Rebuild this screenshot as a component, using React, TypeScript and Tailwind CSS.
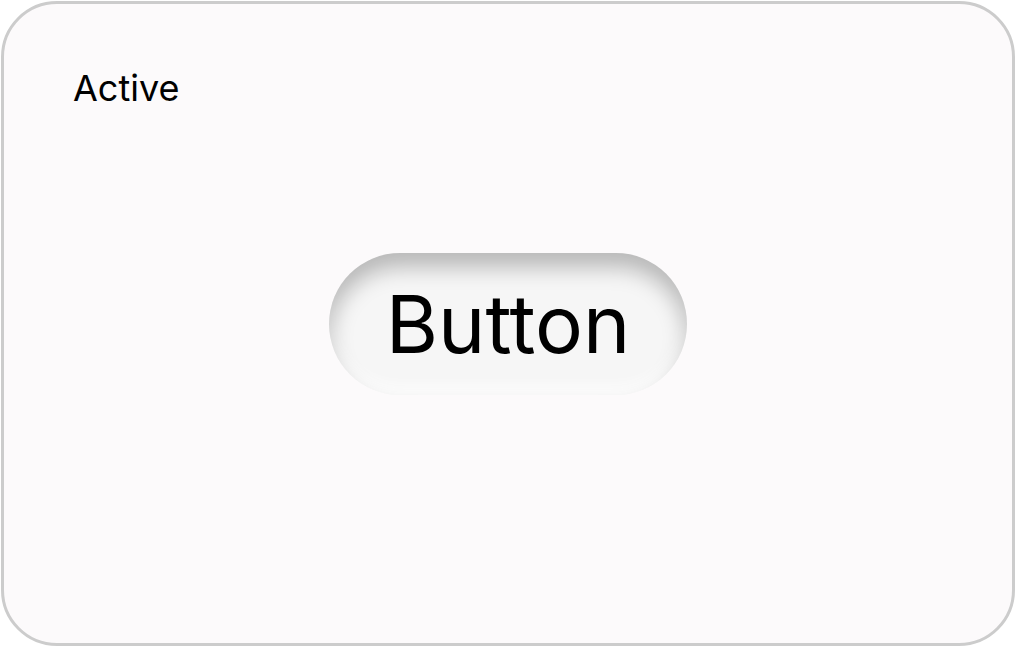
export default function App() {
  return (
    <div className="h-[647px] w-[1016px] bg-white p-px" style={{ fontFamily: "Inter, 'Liberation Sans', sans-serif" }}>
      <div className="grid h-full w-full grid-rows-[1fr_auto_1fr] rounded-[56px] border-[3px] border-[#cccccc] bg-[#fcfafb]">
        <div className="pl-[69px] pt-[66px]">
          <span className="text-[36px] leading-none text-black">Active</span>
        </div>
        <div className="flex justify-center">
          <button className="flex h-[142px] w-[358px] items-center justify-center rounded-full bg-[#f6f6f6] text-[80px] leading-none text-black shadow-[inset_0_14px_22px_rgba(0,0,0,0.26),inset_0_-8px_14px_rgba(255,255,255,0.9)]">
            Button
          </button>
        </div>
        <div />
      </div>
    </div>
  );
}
